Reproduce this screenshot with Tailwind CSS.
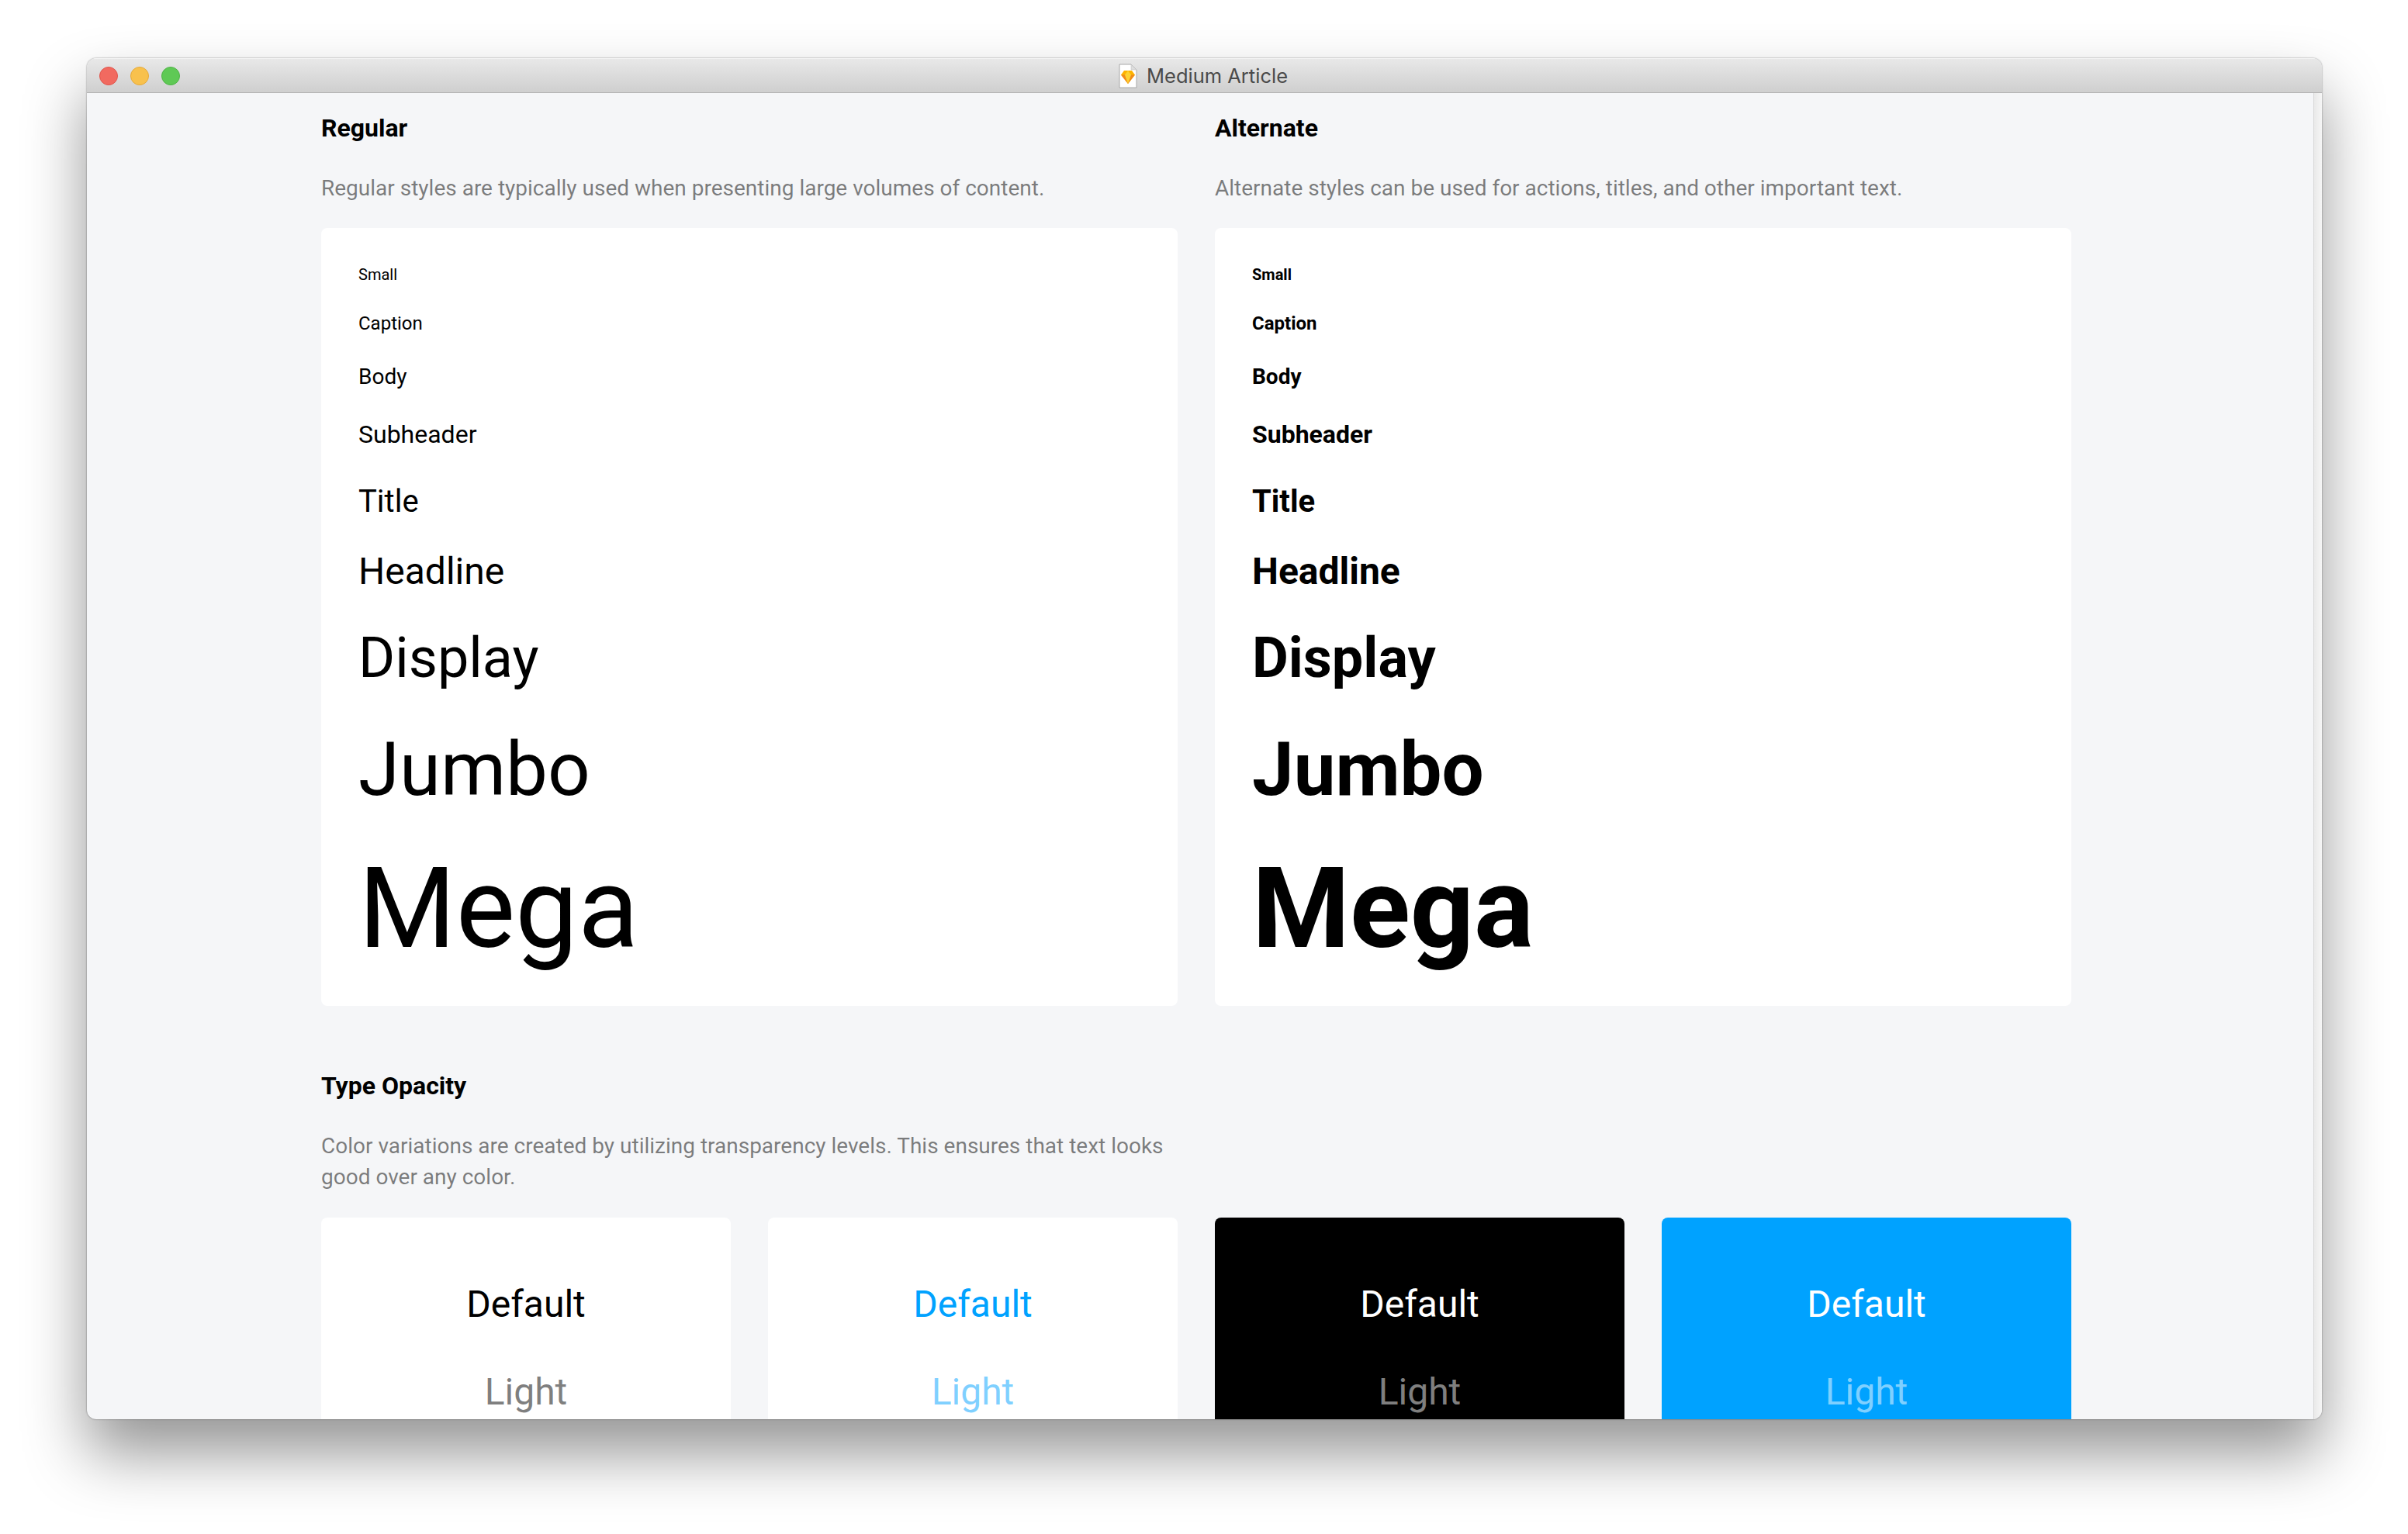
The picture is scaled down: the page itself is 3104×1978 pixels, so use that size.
<!DOCTYPE html>
<html lang="en">
  <head>
    <meta charset="UTF-8" />
    <title>Medium Article</title>
    <script src="https://cdn.jsdelivr.net/npm/@tailwindcss/browser@4"></script>
  </head>
  <body class="bg-white w-[3104px] h-[1978px] overflow-hidden font-['Roboto',sans-serif] text-black">
    <div class="pt-[75px] pl-[112px]">
      <!-- Window -->
      <div class="w-[2881px] h-[1755px] flex flex-col rounded-[12px] overflow-hidden bg-[#f5f6f8] shadow-[0_0_2px_rgba(0,0,0,0.5),0_44px_80px_rgba(0,0,0,0.42)]">
        <!-- Title bar -->
        <div class="relative h-[45px] shrink-0 flex items-center justify-center gap-[12px] pr-[3px] bg-gradient-to-b from-[#e8e8e8] to-[#cfcfcf] border-t border-t-[#f4f4f4] border-b border-b-[#b2b2b2]">
          <div class="absolute left-[16px] top-[10px] flex gap-[16px]">
            <span class="w-[24px] h-[24px] rounded-full bg-[#f16a60] border border-[#e0554c]"></span>
            <span class="w-[24px] h-[24px] rounded-full bg-[#f8c14d] border border-[#e5a93a]"></span>
            <span class="w-[24px] h-[24px] rounded-full bg-[#5fc955] border border-[#4fb347]"></span>
          </div>
          <svg width="24" height="32" viewBox="0 0 24 32" class="shrink-0">
            <path d="M1 1H16L23 8V31H1Z" fill="#fff" stroke="#a8a8a8" stroke-width="1" />
            <path d="M16 1V8H23Z" fill="#dedede" stroke="#b8b8b8" stroke-width="0.5" />
            <path d="M7 9H17L21 14.5L12 26L3 14.5Z" fill="#fdb300" />
            <path d="M3 14.5H21L12 26Z" fill="#f08c1a" />
            <path d="M8 14.5L12 9L16 14.5L12 26Z" fill="#fdd231" />
          </svg>
          <span class="text-[25.5px] leading-[34px] pt-[1px] text-[#4a4a4a] font-['Inter',sans-serif]">Medium Article</span>
        </div>
        <!-- Content -->
        <div class="relative flex-1 overflow-hidden">
          <div class="absolute right-0 top-0 bottom-0 w-[11px] bg-gradient-to-r from-[#e9e9e9] to-[#f6f6f6] border-l border-l-[#d8d8d8]"></div>
          <div class="w-[2256px] ml-[302px] grid grid-cols-2 gap-x-[48px] pt-[25px]">
            <section>
              <h2 class="text-[32px] leading-[40px] font-bold">Regular</h2>
              <p class="mt-[38px] text-[28px] leading-[40px] text-black/50">Regular styles are typically used when presenting large volumes of content.</p>
              <div class="mt-[31px] h-[1003px] bg-white rounded-[8px] pl-[48px] pt-[43px] flex flex-col">
                <div class="h-[34px] text-[20px] leading-[34px]">Small</div>
                <div class="h-[32px] mt-[30px] text-[24px] leading-[32px]">Caption</div>
                <div class="h-[36px] mt-[35px] text-[28px] leading-[36px]">Body</div>
                <div class="h-[40px] mt-[36px] text-[32px] leading-[40px]">Subheader</div>
                <div class="h-[52px] mt-[41px] text-[40px] leading-[52px]">Title</div>
                <div class="h-[60px] mt-[34px] text-[48px] leading-[60px]">Headline</div>
                <div class="h-[88px] mt-[38px] text-[72px] leading-[88px]">Display</div>
                <div class="h-[112px] mt-[43px] text-[96px] leading-[112px]">Jumbo</div>
                <div class="h-[168px] mt-[40px] text-[144px] leading-[168px]">Mega</div>
              </div>
            </section>
            <section>
              <h2 class="text-[32px] leading-[40px] font-bold">Alternate</h2>
              <p class="mt-[38px] text-[28px] leading-[40px] text-black/50">Alternate styles can be used for actions, titles, and other important text.</p>
              <div class="mt-[31px] h-[1003px] bg-white rounded-[8px] pl-[48px] pt-[43px] flex flex-col font-bold">
                <div class="h-[34px] text-[20px] leading-[34px]">Small</div>
                <div class="h-[32px] mt-[30px] text-[24px] leading-[32px]">Caption</div>
                <div class="h-[36px] mt-[35px] text-[28px] leading-[36px]">Body</div>
                <div class="h-[40px] mt-[36px] text-[32px] leading-[40px]">Subheader</div>
                <div class="h-[52px] mt-[41px] text-[40px] leading-[52px]">Title</div>
                <div class="h-[60px] mt-[34px] text-[48px] leading-[60px]">Headline</div>
                <div class="h-[88px] mt-[38px] text-[72px] leading-[88px]">Display</div>
                <div class="h-[112px] mt-[43px] text-[96px] leading-[112px]">Jumbo</div>
                <div class="h-[168px] mt-[40px] text-[144px] leading-[168px]">Mega</div>
              </div>
            </section>
          </div>
          <div class="w-[2256px] ml-[302px] mt-[83px]">
            <h2 class="text-[32px] leading-[40px] font-bold">Type Opacity</h2>
            <p class="mt-[38px] w-[1104px] text-[28px] leading-[40px] text-black/50">Color variations are created by utilizing transparency levels. This ensures that text looks good over any color.</p>
            <div class="mt-[32px] grid grid-cols-4 gap-[48px]">
              <div class="h-[400px] bg-white rounded-[8px] flex flex-col items-center pt-[84px] gap-[57px] text-[48px] leading-[56px]">
                <span>Default</span>
                <span class="text-black/50">Light</span>
              </div>
              <div class="h-[400px] bg-white rounded-[8px] flex flex-col items-center pt-[84px] gap-[57px] text-[48px] leading-[56px] text-[#00a2ff]">
                <span>Default</span>
                <span class="text-[#00a2ff]/50">Light</span>
              </div>
              <div class="h-[400px] bg-black rounded-[8px] flex flex-col items-center pt-[84px] gap-[57px] text-[48px] leading-[56px] text-white">
                <span>Default</span>
                <span class="text-white/50">Light</span>
              </div>
              <div class="h-[400px] bg-[#00a2ff] rounded-[8px] flex flex-col items-center pt-[84px] gap-[57px] text-[48px] leading-[56px] text-white">
                <span>Default</span>
                <span class="text-white/50">Light</span>
              </div>
            </div>
          </div>
        </div>
      </div>
    </div>
  </body>
</html>
